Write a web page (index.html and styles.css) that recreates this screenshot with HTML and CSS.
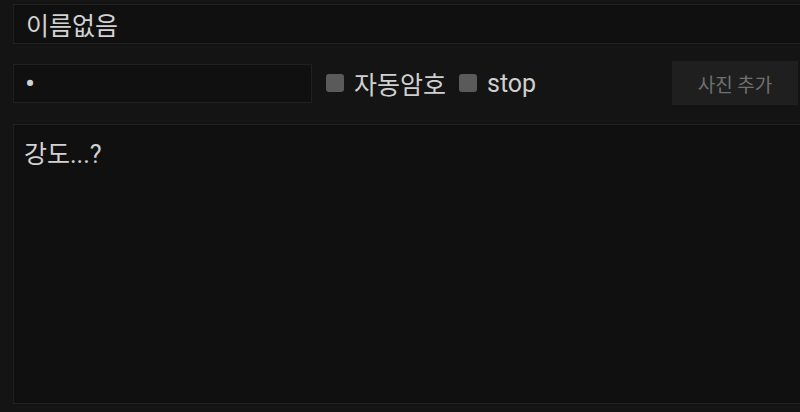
FILE: index.html
```html
<!DOCTYPE html>
<html lang="ko">
<head>
  <meta charset="UTF-8">
  <meta name="viewport" content="width=device-width, initial-scale=1.0">
  <title>새 글</title>
  <link rel="stylesheet" href="styles.css">
</head>
<body>

  <!-- Post editor -->
  <main class="editor">
    <input class="field title-field" type="text" value="이름없음">

    <div class="option-row">
      <input class="field pass-field" type="password" value="a">
      <label class="check">
        <input type="checkbox">
        <span>자동암호</span>
      </label>
      <label class="check">
        <input type="checkbox">
        <span>stop</span>
      </label>
      <button class="photo-btn" type="button">사진 추가</button>
    </div>

    <textarea class="field body-field">강도...?</textarea>
  </main>

</body>
</html>
```

FILE: styles.css
```css
body {
  margin: 0;
  background-color: #141414;
  font-family: Roboto, "Noto Sans CJK KR", sans-serif;
  color: #d2d2d2;
  overflow: hidden;
}

.editor {
  padding: 4px 0 0 13px;
  width: 800px;
}

.field {
  display: block;
  box-sizing: border-box;
  background-color: #101010;
  border: 1px solid #202020;
  color: #d2d2d2;
  font-family: Roboto, "Noto Sans CJK KR", sans-serif;
  font-size: 25px;
  outline: none;
  margin: 0;
}

.title-field {
  width: 800px;
  height: 40px;
  padding: 0 12px;
}

.option-row {
  display: flex;
  align-items: center;
  margin-top: 17px;
  height: 44px;
}

.pass-field {
  flex-shrink: 0;
  width: 299px;
  height: 39px;
  margin-top: 1px;
  padding: 0 11px;
  font-size: 30px;
}

.check {
  display: flex;
  align-items: center;
  font-size: 25px;
  color: #cfcfcf;
  margin-left: 14px;
}

.check + .check {
  margin-left: 13px;
}

.check input {
  appearance: none;
  width: 18px;
  height: 18px;
  margin: 0 10px 0 0;
  border-radius: 3px;
  background-color: #5a5a5a;
}

.photo-btn {
  flex-shrink: 0;
  margin-left: auto;
  margin-right: 15px;
  width: 126px;
  height: 44px;
  background-color: #1f1f1f;
  border: none;
  color: #707070;
  font-family: Roboto, "Noto Sans CJK KR", sans-serif;
  font-size: 19px;
}

.body-field {
  margin-top: 19px;
  width: 800px;
  height: 280px;
  padding: 14px 10px;
  resize: none;
  line-height: 1.3;
}
```
